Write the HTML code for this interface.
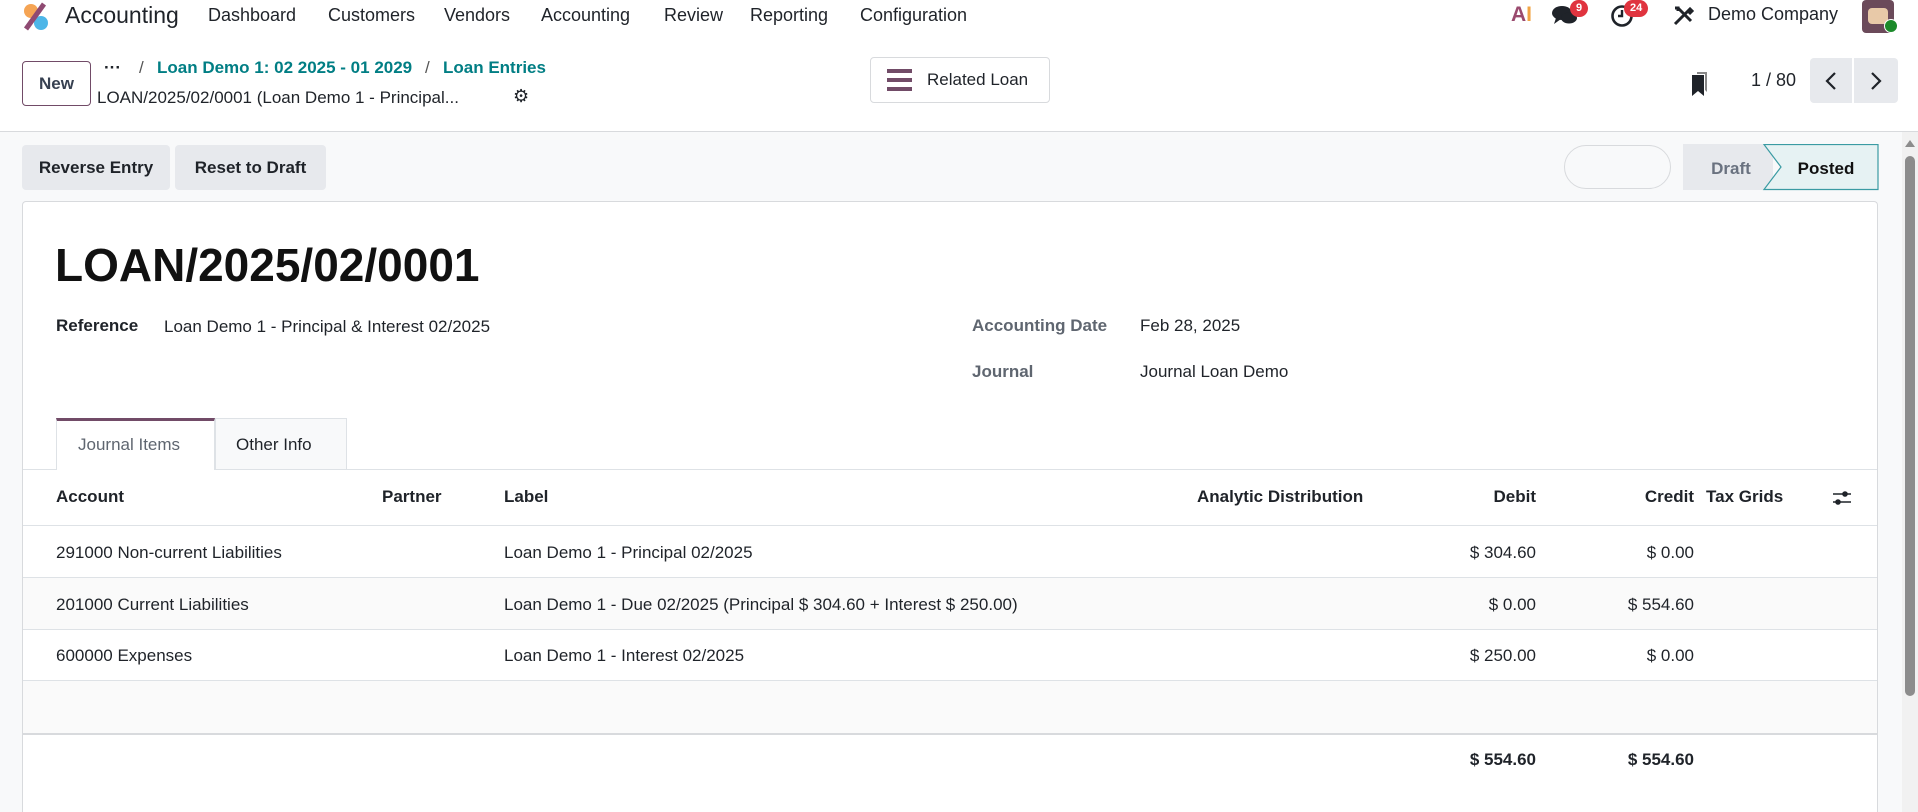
<!DOCTYPE html>
<html style="height:812px;overflow:hidden"><head><meta charset="utf-8"><style>
*{box-sizing:border-box;margin:0;padding:0}
body{width:1918px;height:812px;overflow:hidden;font-family:"Liberation Sans",sans-serif;color:#1f2329;background:#f8f9fa;position:relative;font-size:17px}
.a{position:absolute;white-space:nowrap}
.top{position:absolute;left:0;top:0;width:1918px;height:132px;background:#fff;border-bottom:1px solid #d8dadd}
.nav{font-size:18px;top:5px;color:#1f2329}
.btn{position:absolute;background:#e7e9ed;border-radius:4px;font-weight:bold;font-size:17px;display:flex;align-items:center;justify-content:center;color:#1f2329}
.badge{position:absolute;background:#e0343f;color:#fff;font-size:11px;font-weight:bold;border-radius:9px;height:17px;line-height:17px;padding:0 6px}
.line{position:absolute;left:23px;width:1854px;height:1px;background:#dee2e6}
.th{font-weight:bold;top:487px}
</style></head><body>
<div class="top"></div>
<svg class="a" style="left:20px;top:2px" width="32" height="30" viewBox="0 0 32 30">
<circle cx="11" cy="9" r="7" fill="#f5a454"/><circle cx="21" cy="21" r="7" fill="#4db6e8"/>
<line x1="24" y1="2" x2="6" y2="27" stroke="#8f4a72" stroke-width="5"/></svg>
<div class="a" style="left:65px;top:2px;font-size:23px">Accounting</div>
<div class="a nav" style="left:208px">Dashboard</div>
<div class="a nav" style="left:328px">Customers</div>
<div class="a nav" style="left:444px">Vendors</div>
<div class="a nav" style="left:541px">Accounting</div>
<div class="a nav" style="left:664px">Review</div>
<div class="a nav" style="left:750px">Reporting</div>
<div class="a nav" style="left:860px">Configuration</div>
<div class="a" style="left:1511px;top:3px;font-size:21px;font-weight:bold;color:#9a4a6e">A<span style="color:#f2a444">I</span></div>
<svg class="a" style="left:1552px;top:5px" width="26" height="22" viewBox="0 0 26 22"><ellipse cx="10" cy="8" rx="10" ry="7" fill="#1f2329"/><path d="M4 13 L2 19 L9 14Z" fill="#1f2329"/><ellipse cx="17" cy="13" rx="8" ry="5.5" fill="#1f2329"/></svg>
<div class="badge" style="left:1570px;top:0px">9</div>
<svg class="a" style="left:1610px;top:4px" width="24" height="24" viewBox="0 0 24 24"><circle cx="12" cy="12" r="9.5" fill="none" stroke="#1f2329" stroke-width="2.6"/><path d="M12 6v6h-4" fill="none" stroke="#1f2329" stroke-width="2.4"/></svg>
<div class="badge" style="left:1624px;top:0px">24</div>
<svg class="a" style="left:1672px;top:5px" width="22" height="22" viewBox="0 0 22 22"><path d="M3 19L15 7M6 3l13 13M15 7l3-3 2 2-3 3M3 3l3 0 0 3" stroke="#1f2329" stroke-width="3" fill="none"/></svg>
<div class="a" style="left:1708px;top:4px;font-size:18px">Demo Company</div>
<div class="a" style="left:1862px;top:0;width:32px;height:33px;background:#6b4a5a;border-radius:4px"></div>
<div class="a" style="left:1868px;top:8px;width:20px;height:16px;background:#e8c9a8;border-radius:4px"></div>
<div class="a" style="left:1884px;top:19px;width:14px;height:14px;background:#1b8a2a;border-radius:50%;border:1px solid #fff"></div>
<div class="a" style="left:22px;top:61px;width:69px;height:45px;border:1px solid #714b67;border-radius:4px;font-size:17px;display:flex;align-items:center;justify-content:center;font-weight:bold;color:#374151">New</div>
<div class="a" style="left:104px;top:58px;font-size:17px;font-weight:bold">···</div>
<div class="a" style="left:139px;top:58px;font-size:17px;color:#555">/</div>
<div class="a" style="left:157px;top:58px;font-size:17px;font-weight:bold;color:#017e84">Loan Demo 1: 02 2025 - 01 2029</div>
<div class="a" style="left:425px;top:58px;font-size:17px;color:#555">/</div>
<div class="a" style="left:443px;top:58px;font-size:17px;font-weight:bold;color:#017e84">Loan Entries</div>
<div class="a" style="left:97px;top:88px;font-size:17px">LOAN/2025/02/0001 (Loan Demo 1 - Principal...</div>
<div class="a" style="left:513px;top:86px;font-size:18px">⚙</div>
<div class="a" style="left:870px;top:57px;width:180px;height:46px;border:1px solid #d8dadd;border-radius:4px;background:#fff"></div>
<div class="a" style="left:887px;top:69px;width:25px;height:4px;background:#714b67"></div>
<div class="a" style="left:887px;top:78px;width:25px;height:4px;background:#714b67"></div>
<div class="a" style="left:887px;top:87px;width:25px;height:4px;background:#714b67"></div>
<div class="a" style="left:927px;top:70px;font-size:17px">Related Loan</div>
<svg class="a" style="left:1690px;top:69px" width="20" height="28" viewBox="0 0 20 28"><path d="M7 3h10v20l-2-2V5H7z" fill="#888"/><path d="M2 6h12v21l-6-5-6 5z" fill="#1f2329"/></svg>
<div class="a" style="left:1751px;top:70px;font-size:18px">1 / 80</div>
<div class="btn" style="left:1810px;top:58px;width:42px;height:45px;border-radius:4px 0 0 4px;font-weight:normal">
<svg width="14" height="20" viewBox="0 0 14 20"><path d="M11 2L3 10l8 8" stroke="#1f2329" stroke-width="2.2" fill="none"/></svg></div>
<div class="btn" style="left:1854px;top:58px;width:44px;height:45px;border-radius:0 4px 4px 0;font-weight:normal">
<svg width="14" height="20" viewBox="0 0 14 20"><path d="M3 2l8 8-8 8" stroke="#1f2329" stroke-width="2.2" fill="none"/></svg></div>
<div class="btn" style="left:22px;top:145px;width:148px;height:45px">Reverse Entry</div>
<div class="btn" style="left:175px;top:145px;width:151px;height:45px">Reset to Draft</div>
<div class="a" style="left:1564px;top:145px;width:107px;height:44px;border:1px solid #d8dadd;border-radius:22px"></div>
<svg class="a" style="left:1683px;top:144px" width="196" height="47" viewBox="0 0 196 47">
<rect x="0" y="0" width="90" height="46" fill="#e7e9ed"/>
<path d="M81 0.5H195V45.5H81L98 23Z" fill="#e6f2f3" stroke="#3a9ba3" stroke-width="1.2"/>
<text x="48" y="30" font-family="Liberation Sans" font-size="17" font-weight="bold" fill="#6a7280" text-anchor="middle">Draft</text>
<text x="143" y="30" font-family="Liberation Sans" font-size="17" font-weight="bold" fill="#111" text-anchor="middle">Posted</text></svg>
<div class="a" style="left:1902px;top:132px;width:16px;height:680px;background:#f1f1f1"></div>
<div class="a" style="left:1905px;top:156px;width:10px;height:540px;background:#8c8c8c;border-radius:5px"></div>
<div class="a" style="left:1905px;top:140px;width:0;height:0;border-left:5px solid transparent;border-right:5px solid transparent;border-bottom:7px solid #8c8c8c"></div>
<div class="a" style="left:22px;top:201px;width:1856px;height:611px;background:#fff;border:1px solid #d8dadd;border-bottom:none;border-radius:4px 4px 0 0"></div>
<div class="a" style="left:55px;top:238px;font-size:46px;font-weight:bold;color:#111">LOAN/2025/02/0001</div>
<div class="a" style="left:56px;top:316px;font-weight:bold">Reference</div>
<div class="a" style="left:164px;top:317px">Loan Demo 1 - Principal &amp; Interest 02/2025</div>
<div class="a" style="left:972px;top:316px;font-weight:bold;color:#5f6670">Accounting Date</div>
<div class="a" style="left:1140px;top:316px">Feb 28, 2025</div>
<div class="a" style="left:972px;top:362px;font-weight:bold;color:#5f6670">Journal</div>
<div class="a" style="left:1140px;top:362px">Journal Loan Demo</div>
<div class="line" style="top:469px"></div>
<div class="a" style="left:56px;top:418px;width:159px;height:52px;background:#fff;border:1px solid #dee2e6;border-top:3px solid #714b67;border-bottom:none"></div>
<div class="a" style="left:78px;top:435px;color:#5f6670">Journal Items</div>
<div class="a" style="left:215px;top:418px;width:132px;height:51px;background:#f8f9fa;border:1px solid #dee2e6;border-bottom:none"></div>
<div class="a" style="left:236px;top:435px">Other Info</div>
<div class="a th" style="left:56px">Account</div>
<div class="a th" style="left:382px">Partner</div>
<div class="a th" style="left:504px">Label</div>
<div class="a th" style="left:1197px">Analytic Distribution</div>
<div class="a th" style="right:382px">Debit</div>
<div class="a th" style="right:224px">Credit</div>
<div class="a th" style="left:1706px">Tax Grids</div>
<svg class="a" style="left:1832px;top:489px" width="20" height="18" viewBox="0 0 20 18"><path d="M1 5h18M1 13h18" stroke="#1f2329" stroke-width="1.6"/><circle cx="13" cy="5" r="2.8" fill="#1f2329"/><circle cx="6" cy="13" r="2.8" fill="#1f2329"/></svg>
<div class="line" style="top:525px"></div>
<div class="a" style="left:23px;top:578px;width:1854px;height:51px;background:#fafafa"></div>
<div class="a" style="left:23px;top:681px;width:1854px;height:52px;background:#fafafa"></div>
<div class="line" style="top:577px"></div>
<div class="line" style="top:629px"></div>
<div class="line" style="top:680px"></div>
<div class="line" style="top:733px;height:2px;background:#d8dadd"></div>
<div class="a" style="left:56px;top:543px">291000 Non-current Liabilities</div>
<div class="a" style="left:504px;top:543px">Loan Demo 1 - Principal 02/2025</div>
<div class="a" style="right:382px;top:543px">$ 304.60</div>
<div class="a" style="right:224px;top:543px">$ 0.00</div>
<div class="a" style="left:56px;top:595px">201000 Current Liabilities</div>
<div class="a" style="left:504px;top:595px">Loan Demo 1 - Due 02/2025 (Principal $ 304.60 + Interest $ 250.00)</div>
<div class="a" style="right:382px;top:595px">$ 0.00</div>
<div class="a" style="right:224px;top:595px">$ 554.60</div>
<div class="a" style="left:56px;top:646px">600000 Expenses</div>
<div class="a" style="left:504px;top:646px">Loan Demo 1 - Interest 02/2025</div>
<div class="a" style="right:382px;top:646px">$ 250.00</div>
<div class="a" style="right:224px;top:646px">$ 0.00</div>
<div class="a" style="right:382px;top:750px;font-weight:bold">$ 554.60</div>
<div class="a" style="right:224px;top:750px;font-weight:bold">$ 554.60</div>
</body></html>
